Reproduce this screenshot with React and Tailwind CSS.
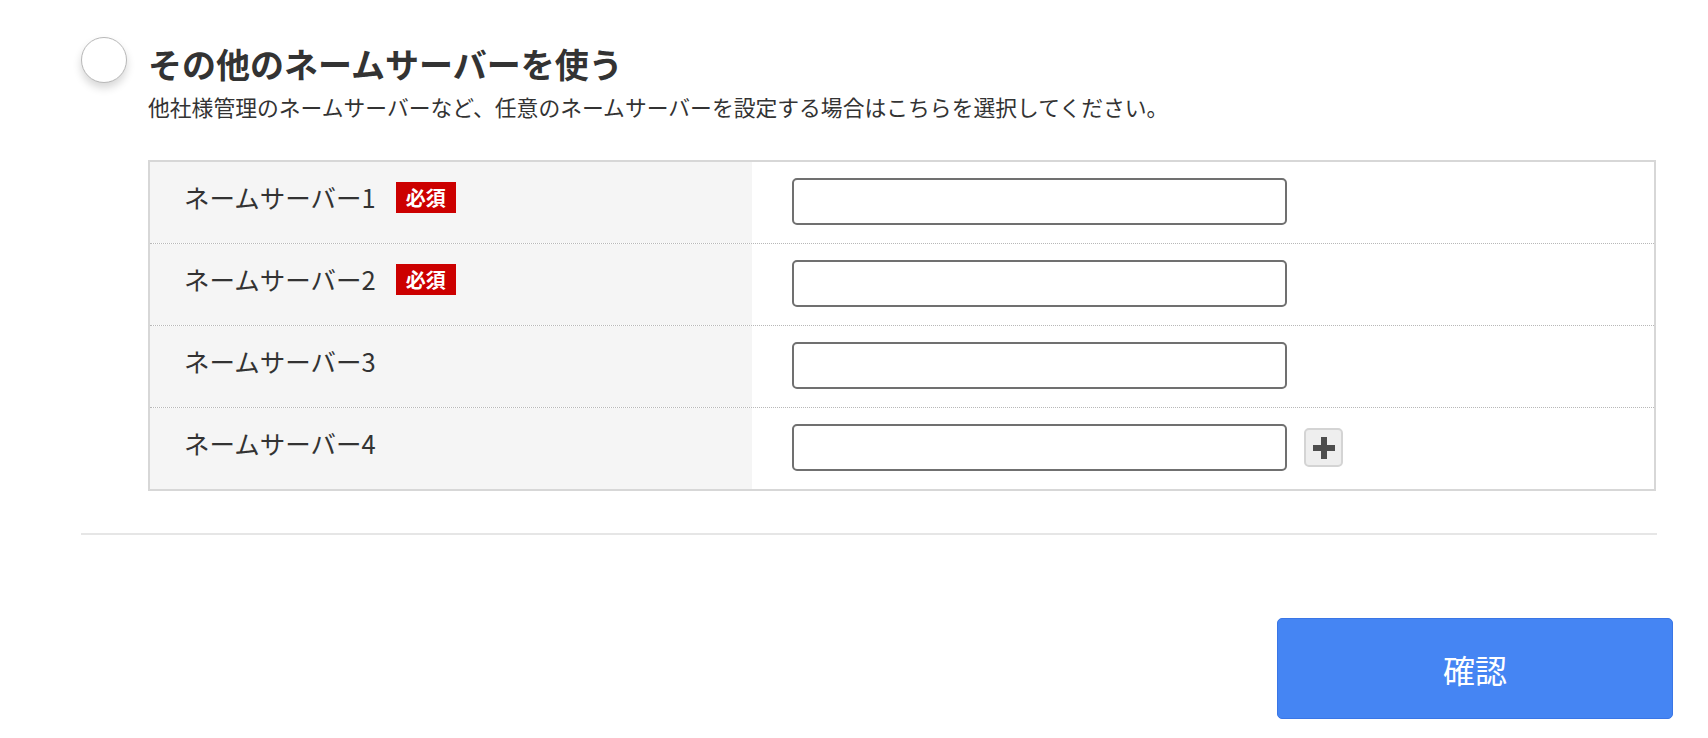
import { useState } from "react";

const jp = { fontFamily: '"Noto Sans CJK JP", "Noto Sans", sans-serif' };

function Row({ n, required, last, extra }) {
  return (
    <div className={`flex ${last ? "" : "border-b border-dotted border-[#b8b8b8]"}`}>
      <div className="w-[602px] shrink-0 bg-[#f5f5f5] pl-[34px] pt-[18px]">
        <div className="flex items-center h-[34px]">
          <span className="text-[25.5px] leading-[34px] text-[#333]">ネームサーバー{n}</span>
          {required && (
            <span className="ml-[20px] h-[31px] px-[10px] bg-[#cc0000] text-white text-[20px] font-bold leading-[31px]">必須</span>
          )}
        </div>
      </div>
      <div className="flex items-center pl-[40px] pt-[16px] pb-[18px]">
        <input
          type="text"
          className="w-[495px] h-[47px] rounded-[5px] border-2 border-[#707070] bg-white px-3 text-[20px] outline-none"
        />
        {extra}
      </div>
    </div>
  );
}

export default function App() {
  const [checked, setChecked] = useState(false);

  return (
    <div className="min-h-[738px] bg-white text-[#333]" style={jp}>
      <div className="pt-[37px] pl-[81px] w-[1673px] flex flex-col">
        <div className="flex">
          <button
            onClick={() => setChecked(!checked)}
            className="w-[46px] h-[46px] shrink-0 rounded-full bg-white border-[1.5px] border-[#b8b8b8] shadow-[0_5px_9px_rgba(0,0,0,0.16)] flex items-center justify-center"
          >
            {checked && <span className="w-[22px] h-[22px] rounded-full bg-[#4285f4]" />}
          </button>
          <div className="ml-[21px] flex flex-col">
            <h2 className="mt-[4px] text-[34px] font-bold leading-[46px] text-[#333]">その他のネームサーバーを使う</h2>
            <p className="mt-[5px] text-[21.8px] leading-[30px] text-[#333]">
              他社様管理のネームサーバーなど、任意のネームサーバーを設定する場合はこちらを選択してください。
            </p>

            <div className="mt-[38px] w-[1508px] border-2 border-[#d7d7d7]">
              <Row n={1} required />
              <Row n={2} required />
              <Row n={3} />
              <Row
                n={4}
                last
                extra={
                  <button className="ml-[17px] w-[39px] h-[39px] rounded-[5px] bg-[#eeeeee] border-2 border-[#d4d4d4] flex items-center justify-center">
                    <svg width="24" height="24" viewBox="0 0 24 24">
                      <path d="M12 1v22M1 12h22" stroke="#4d4d4d" strokeWidth="6" />
                    </svg>
                  </button>
                }
              />
            </div>
          </div>
        </div>

        <div className="mt-[42px] w-[1576px] h-[2px] bg-[#e6e6e6]" />

        <div className="flex justify-end mt-[83px]">
          <button className="w-[396px] h-[101px] rounded-[5px] bg-[#4585f3] border border-[#3a76e6] text-white text-[32px] leading-none">
            確認
          </button>
        </div>
      </div>
    </div>
  );
}
